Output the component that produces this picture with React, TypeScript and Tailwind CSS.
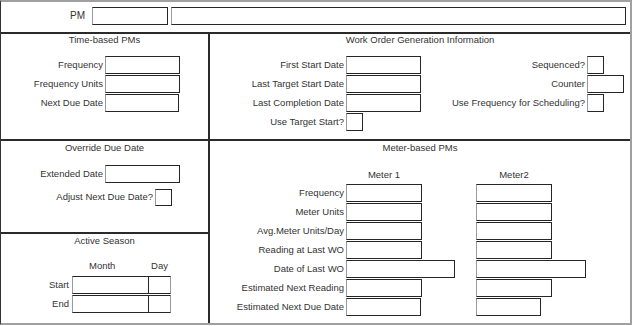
import React from "react";

const Box = ({ w, h = 18, className = "" }: { w: number; h?: number; className?: string }) => (
  <div
    className={"shrink-0 border border-[#262626] border-l-[#9a9a9a] bg-white " + className}
    style={{ width: w, height: h }}
  />
);

const Lbl = ({ children, w }: { children: React.ReactNode; w: number }) => (
  <div className="shrink-0 text-right whitespace-nowrap leading-[18px]" style={{ width: w }}>
    {children}
  </div>
);

export default function App() {
  return (
    <div className="w-[633px] h-[326px] bg-white font-['Liberation_Sans',Arial,sans-serif] text-[9.5px] text-[#333]">
      <div className="w-[632px] h-[325px] flex flex-col border-t-2 border-t-[#a0a0a0] border-l border-l-[#333] border-r-2 border-r-[#a0a0a0] border-b-2 border-b-[#a0a0a0]">
        {/* PM row */}
        <div className="h-[32px] shrink-0 flex items-start pt-[5px] border-b-2 border-b-[#2a2a2a]">
          <div className="w-[84px] text-right leading-[18px] text-[10px]">PM</div>
          <Box w={76} className="ml-[7px]" />
          <Box w={455} className="ml-[3px]" />
        </div>

        <div className="flex-1 flex min-h-0">
          {/* Left column */}
          <div className="w-[209px] shrink-0 flex flex-col border-r-2 border-r-[#2a2a2a]">
            {/* Time-based */}
            <div className="h-[107px] shrink-0 border-b-2 border-b-[#2a2a2a] flex flex-col">
              <div className="text-center leading-[11px] pt-[0px]">Time-based PMs</div>
              <div className="mt-[11px] flex flex-col gap-[1px]">
                <div className="flex items-center">
                  <Lbl w={102}>Frequency</Lbl>
                  <Box w={75} className="ml-[2px]" />
                </div>
                <div className="flex items-center">
                  <Lbl w={102}>Frequency Units</Lbl>
                  <Box w={75} className="ml-[2px]" />
                </div>
                <div className="flex items-center">
                  <Lbl w={102}>Next Due Date</Lbl>
                  <Box w={74} className="ml-[2px]" />
                </div>
              </div>
            </div>

            {/* Override */}
            <div className="h-[93px] shrink-0 border-b-2 border-b-[#2a2a2a] flex flex-col">
              <div className="text-center leading-[11px] pt-[1px]">Override Due Date</div>
              <div className="mt-[12px] flex items-center">
                <Lbl w={102}>Extended Date</Lbl>
                <Box w={75} className="ml-[2px]" />
              </div>
              <div className="mt-[5px] flex items-center">
                <Lbl w={152}>Adjust Next Due Date?</Lbl>
                <Box w={17} h={17} className="ml-[2px]" />
              </div>
            </div>

            {/* Active Season */}
            <div className="flex-1 flex flex-col">
              <div className="text-center leading-[11px] pt-[1px]">Active Season</div>
              <div className="mt-[14px] flex leading-[11px]">
                <div className="w-[88px]" />
                <div className="w-[59px]">Month</div>
                <div className="w-[23px] text-center">Day</div>
              </div>
              <div className="mt-[5px] flex flex-col gap-[1px]">
                <div className="flex items-center">
                  <Lbl w={68}>Start</Lbl>
                  <Box w={77} className="ml-[3px]" />
                  <Box w={23} className="-ml-px border-l-[#262626] border-r-[#9a9a9a]" />
                </div>
                <div className="flex items-center">
                  <Lbl w={68}>End</Lbl>
                  <Box w={77} className="ml-[3px]" />
                  <Box w={23} className="-ml-px border-l-[#262626] border-r-[#9a9a9a]" />
                </div>
              </div>
            </div>
          </div>

          {/* Right column */}
          <div className="flex-1 flex flex-col">
            {/* Work Order */}
            <div className="h-[107px] shrink-0 border-b-2 border-b-[#2a2a2a] flex flex-col">
              <div className="text-center leading-[11px]">Work Order Generation Information</div>
              <div className="mt-[11px] flex">
                <div className="flex flex-col gap-[1px]">
                  <div className="flex items-center">
                    <Lbl w={134}>First Start Date</Lbl>
                    <Box w={75} className="ml-[2px]" />
                  </div>
                  <div className="flex items-center">
                    <Lbl w={134}>Last Target Start Date</Lbl>
                    <Box w={75} className="ml-[2px]" />
                  </div>
                  <div className="flex items-center">
                    <Lbl w={134}>Last Completion Date</Lbl>
                    <Box w={75} className="ml-[2px]" />
                  </div>
                  <div className="flex items-center">
                    <Lbl w={134}>Use Target Start?</Lbl>
                    <Box w={17} className="ml-[2px]" />
                  </div>
                </div>
                <div className="ml-auto mr-[6px] flex flex-col gap-[1px]">
                  <div className="flex items-center">
                    <Lbl w={134}>Sequenced?</Lbl>
                    <Box w={17} className="ml-[2px]" />
                    <div className="w-[20px]" />
                  </div>
                  <div className="flex items-center">
                    <Lbl w={134}>Counter</Lbl>
                    <Box w={37} className="ml-[2px]" />
                  </div>
                  <div className="flex items-center">
                    <Lbl w={134}>Use Frequency for Scheduling?</Lbl>
                    <Box w={17} className="ml-[2px]" />
                    <div className="w-[20px]" />
                  </div>
                </div>
              </div>
            </div>

            {/* Meter-based */}
            <div className="flex-1 flex flex-col">
              <div className="text-center leading-[11px] pt-[1px]">Meter-based PMs</div>
              <div className="mt-[16px] flex leading-[11px]">
                <div className="w-[136px]" />
                <div className="w-[76px] text-center">Meter 1</div>
                <div className="w-[54px]" />
                <div className="w-[76px] text-center">Meter2</div>
              </div>
              <div className="mt-[4px] flex flex-col gap-[1px]">
                {[
                  ["Frequency", 76, 76],
                  ["Meter Units", 76, 76],
                  ["Avg.Meter Units/Day", 76, 76],
                  ["Reading at Last WO", 76, 76],
                  ["Date of Last WO", 109, 110],
                  ["Estimated Next Reading", 76, 76],
                  ["Estimated Next Due Date", 75, 65],
                ].map(([label, w1, w2]) => (
                  <div key={label as string} className="flex items-center">
                    <Lbl w={134}>{label}</Lbl>
                    <div className="ml-[2px] w-[130px] shrink-0">
                      <Box w={w1 as number} />
                    </div>
                    <Box w={w2 as number} />
                  </div>
                ))}
              </div>
            </div>
          </div>
        </div>
      </div>
    </div>
  );
}
